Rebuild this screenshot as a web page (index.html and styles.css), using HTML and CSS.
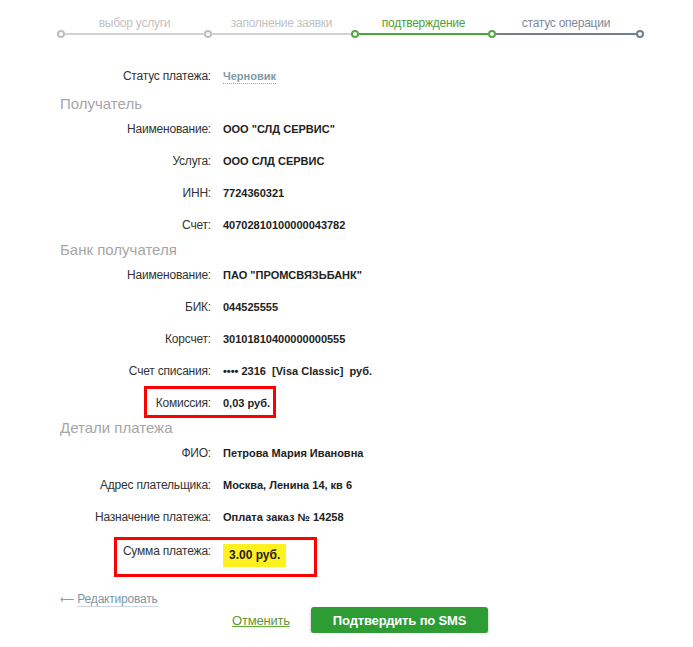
FILE: index.html
```html
<!DOCTYPE html>
<html lang="ru">
<head>
<meta charset="utf-8">
<title>Подтверждение</title>
<link rel="stylesheet" href="styles.css">
</head>
<body>
<div class="steps">
  <span class="dot past"></span>
  <div class="seg past w1"><span class="lbl">выбор услуги</span><span class="line"></span></div>
  <span class="dot past"></span>
  <div class="seg past w1"><span class="lbl">заполнение заявки</span><span class="line"></span></div>
  <span class="dot cur"></span>
  <div class="seg cur w2"><span class="lbl">подтверждение</span><span class="line"></span></div>
  <span class="dot cur"></span>
  <div class="seg next w3"><span class="lbl">статус операции</span><span class="line"></span></div>
  <span class="dot next"></span>
</div>

<div class="main">
  <div class="row"><span class="label">Статус платежа:</span><span class="value"><span class="status">Черновик</span></span></div>

  <div class="heading first">Получатель</div>
  <div class="row"><span class="label">Наименование:</span><span class="value">ООО "СЛД СЕРВИС"</span></div>
  <div class="row"><span class="label">Услуга:</span><span class="value">ООО СЛД СЕРВИС</span></div>
  <div class="row"><span class="label">ИНН:</span><span class="value">7724360321</span></div>
  <div class="row"><span class="label">Счет:</span><span class="value">40702810100000043782</span></div>

  <div class="heading">Банк получателя</div>
  <div class="row"><span class="label">Наименование:</span><span class="value">ПАО "ПРОМСВЯЗЬБАНК"</span></div>
  <div class="row"><span class="label">БИК:</span><span class="value">044525555</span></div>
  <div class="row"><span class="label">Корсчет:</span><span class="value">30101810400000000555</span></div>
  <div class="row"><span class="label">Счет списания:</span><span class="value pre">•••• 2316  [Visa Classic]  руб.</span></div>
  <div class="row marked"><span class="label">Комиссия:</span><span class="value">0,03 руб.</span><span class="redbox fee"></span></div>

  <div class="heading">Детали платежа</div>
  <div class="row"><span class="label">ФИО:</span><span class="value">Петрова Мария Ивановна</span></div>
  <div class="row"><span class="label">Адрес плательщика:</span><span class="value">Москва, Ленина 14, кв 6</span></div>
  <div class="row"><span class="label">Назначение платежа:</span><span class="value">Оплата заказ № 14258</span></div>
  <div class="row sum marked"><span class="label">Сумма платежа:</span><span class="value"><span class="amount">3.00 руб.</span></span><span class="redbox total"></span></div>

  <div class="edit"><span class="arrow">⟵</span> <a class="edit-link" href="#">Редактировать</a></div>
  <div class="actions">
    <a class="cancel" href="#">Отменить</a>
    <button class="confirm" type="button">Подтвердить по SMS</button>
  </div>
</div>
</body>
</html>
```

FILE: styles.css
```css
* { box-sizing: border-box; }
body {
  margin: 0;
  font-family: "Liberation Sans", Arial, sans-serif;
  color: #333;
  background: #fff;
}

/* progress steps */
.steps {
  display: flex;
  align-items: flex-end;
  padding: 16px 0 0 57px;
}
.dot {
  width: 8px;
  height: 8px;
  border-radius: 50%;
  border: 2px solid #bdbdbd;
  background: #fff;
  margin-bottom: -3px;
  flex: none;
  position: relative;
  z-index: 1;
}
.dot.cur { border-color: #55a844; }
.dot.next { border-color: #6f7f8b; }
.seg {
  display: flex;
  flex-direction: column;
  align-items: center;
  flex: none;
}
.w1 { width: 139px; }
.w2 { width: 129px; }
.w3 { width: 140px; }
.lbl {
  font-size: 12px;
  line-height: 14px;
  letter-spacing: -0.25px;
  margin-bottom: 3px;
  white-space: nowrap;
}
.line {
  display: block;
  width: 100%;
  height: 2px;
}
.seg.past .lbl { color: #c2c2c2; }
.seg.past .line { background: #d2d2d2; }
.seg.cur .lbl { color: #4f9f3c; }
.seg.cur .line { background: #4fa63d; }
.seg.next .lbl { color: #7d8a96; }
.seg.next .line { background: #6f7f8b; }

/* details */
.main {
  padding-left: 60px;
  margin-top: 25px;
}
.row {
  display: grid;
  grid-template-columns: 151px auto;
  column-gap: 12px;
  height: 32px;
  align-items: center;
  position: relative;
}
.label {
  text-align: right;
  font-size: 12px;
  line-height: 14px;
  letter-spacing: -0.2px;
  color: #333;
  white-space: nowrap;
}
.value {
  font-size: 11px;
  font-weight: bold;
  line-height: 14px;
  color: #222;
  white-space: nowrap;
}
.pre { white-space: pre; }
.status {
  color: #7e9aa6;
  border-bottom: 1px dotted #8aa3ae;
  padding-bottom: 1px;
}
.heading {
  font-size: 15px;
  line-height: 18px;
  color: #a6a6a6;
}
.heading.first { margin-top: 3px; }

.redbox {
  position: absolute;
  border: 3px solid #f00;
  pointer-events: none;
}
.redbox.fee {
  left: 84px;
  top: -1px;
  width: 132px;
  height: 32px;
}
.row.sum {
  height: 48px;
  align-items: start;
  padding-top: 11px;
}
.redbox.total {
  left: 54px;
  top: 4px;
  width: 203px;
  height: 40px;
}
.amount {
  display: inline-block;
  background: #fff020;
  color: #222;
  font-size: 12px;
  line-height: 15px;
  padding: 4px 6px;
}

.edit {
  margin-top: 11px;
  font-size: 12px;
  line-height: 14px;
}
.arrow {
  color: #999;
  font-size: 10px;
}
.edit-link {
  color: #7e97a4;
  text-decoration: none;
  border-bottom: 1px solid #cdd8de;
  letter-spacing: -0.2px;
}
.actions {
  display: flex;
  align-items: center;
  padding-left: 172px;
  gap: 21px;
}
.cancel {
  font-size: 13px;
  letter-spacing: -0.2px;
  color: #5f9534;
  text-decoration: underline;
  text-decoration-color: #5fae3a;
}
.confirm {
  height: 26px;
  padding: 0 22px;
  border: none;
  border-radius: 3px;
  background: #2c9c33;
  color: #fff;
  font-family: "Liberation Sans", Arial, sans-serif;
  font-size: 13px;
  font-weight: bold;
  letter-spacing: -0.15px;
  box-shadow: 0 2px 3px rgba(0,0,0,0.3);
  cursor: pointer;
}
```
